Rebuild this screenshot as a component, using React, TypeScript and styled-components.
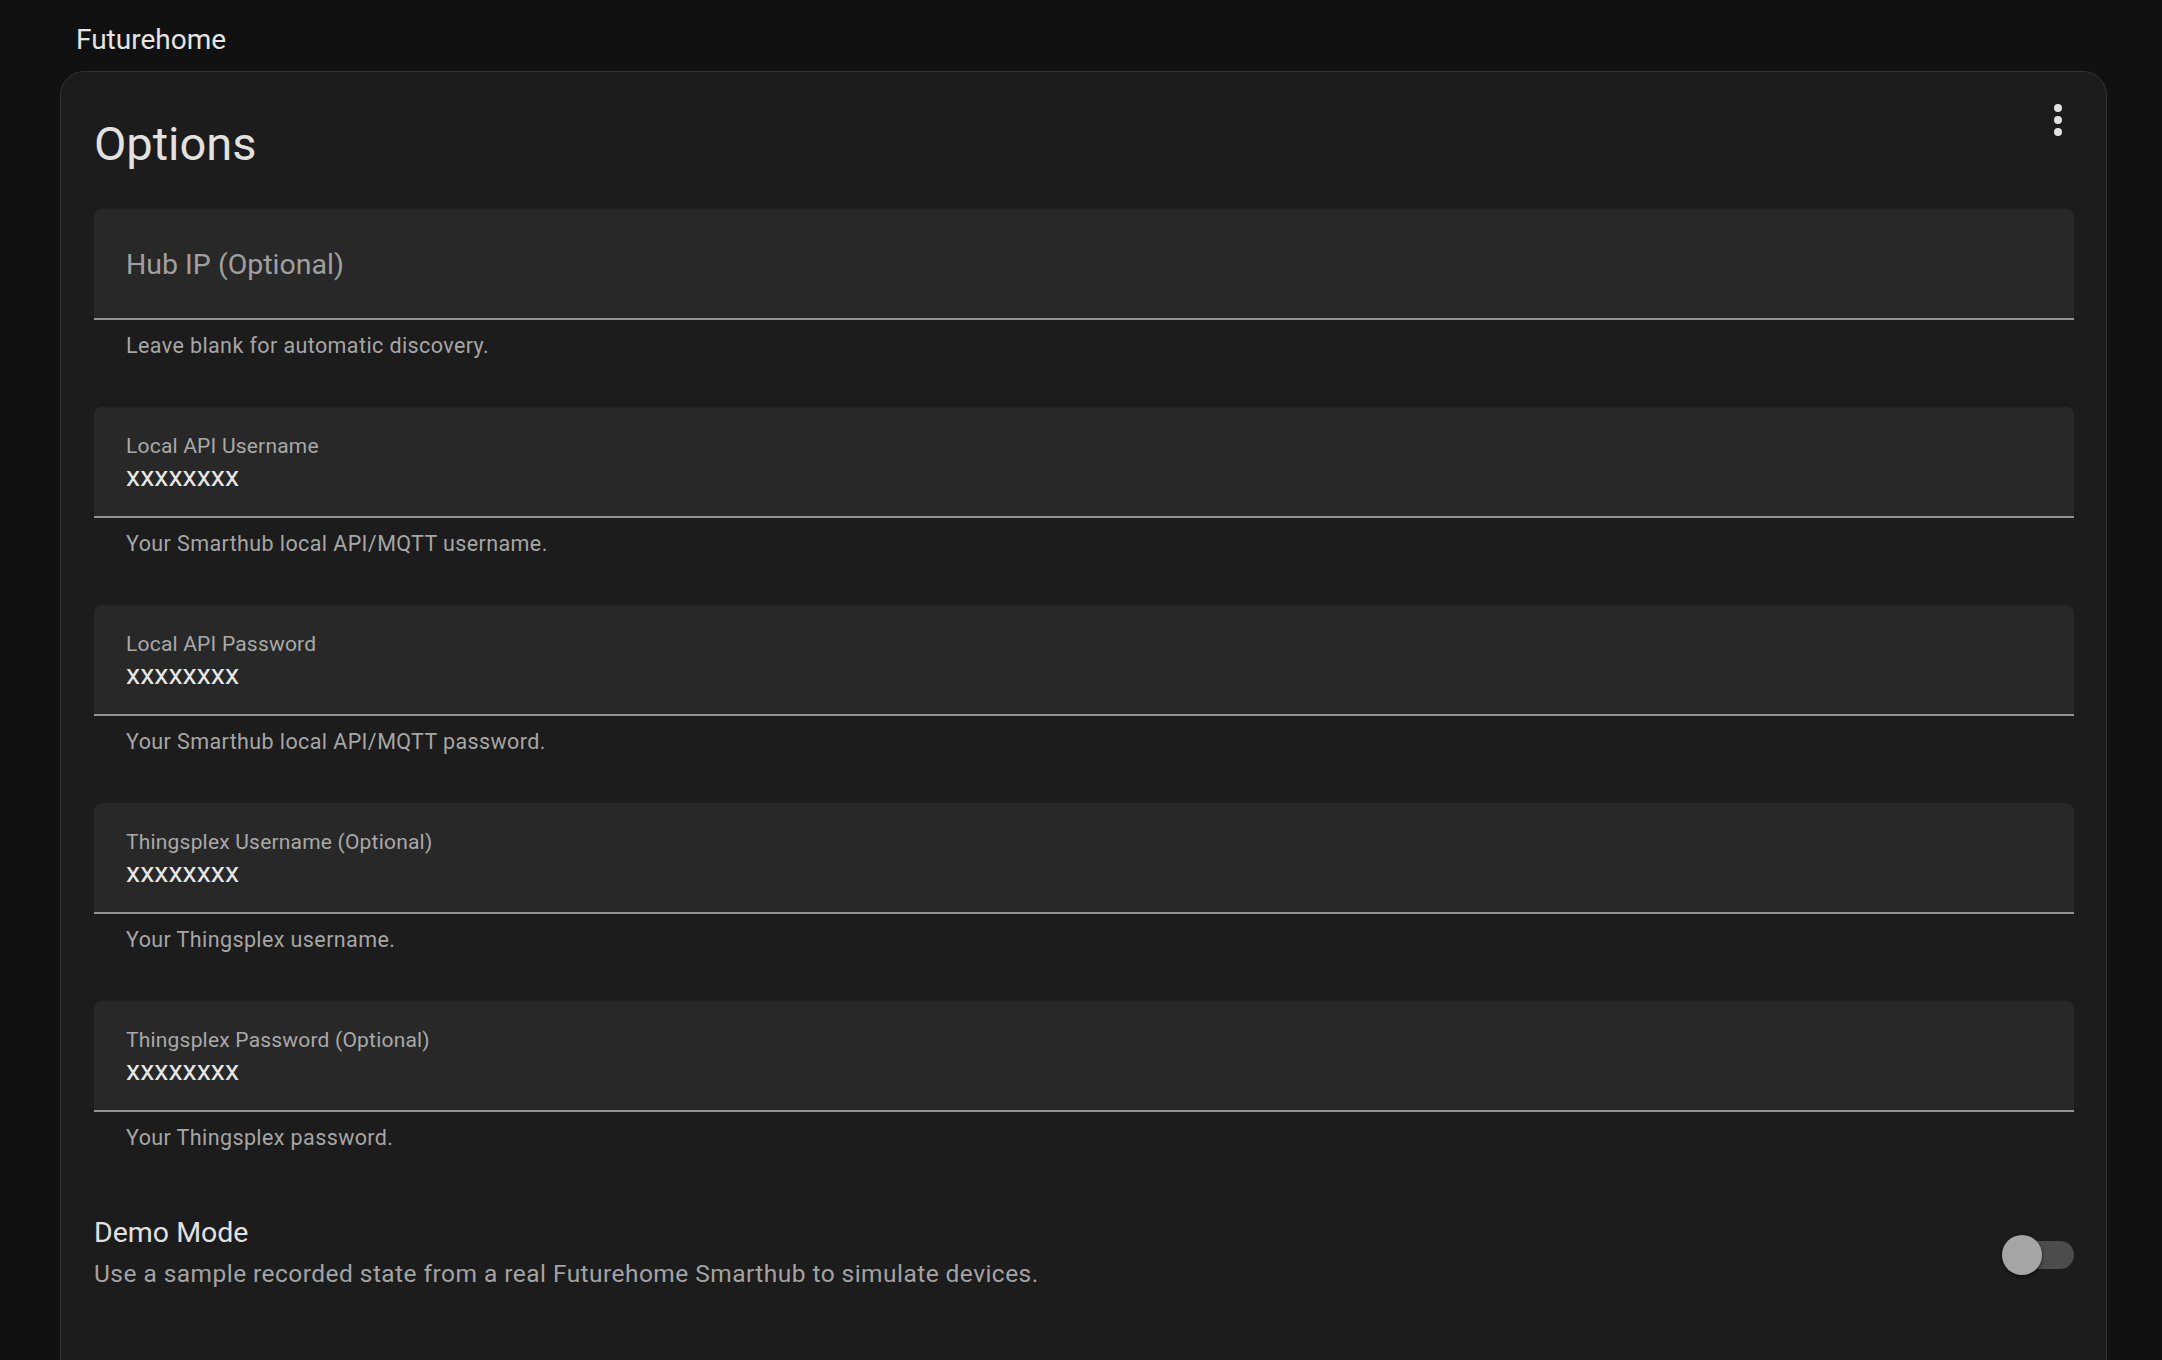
import styled, { createGlobalStyle } from "styled-components";

const GlobalStyle = createGlobalStyle`
    html, body {
        margin: 0;
        padding: 0;
        background: #111111;
        font-family: Roboto, "Noto Sans", "Liberation Sans", sans-serif;
        -webkit-font-smoothing: antialiased;
    }
`;

interface FieldDef {
    label: string;
    value?: string;
    helper: string;
}

const fields: FieldDef[] = [
    { label: "Hub IP (Optional)", helper: "Leave blank for automatic discovery." },
    { label: "Local API Username", value: "xxxxxxxx", helper: "Your Smarthub local API/MQTT username." },
    { label: "Local API Password", value: "xxxxxxxx", helper: "Your Smarthub local API/MQTT password." },
    { label: "Thingsplex Username (Optional)", value: "xxxxxxxx", helper: "Your Thingsplex username." },
    { label: "Thingsplex Password (Optional)", value: "xxxxxxxx", helper: "Your Thingsplex password." },
];

const DotsIcon = () => (
    <svg width="48" height="48" viewBox="0 0 24 24" fill="#e1e1e1">
        <path d="M12,16A2,2 0 0,1 14,18A2,2 0 0,1 12,20A2,2 0 0,1 10,18A2,2 0 0,1 12,16M12,10A2,2 0 0,1 14,12A2,2 0 0,1 12,14A2,2 0 0,1 10,12A2,2 0 0,1 12,10M12,4A2,2 0 0,1 14,6A2,2 0 0,1 12,8A2,2 0 0,1 10,6A2,2 0 0,1 12,4Z" />
    </svg>
);

/*---> Main Component <---*/
const App = () => {
    return (
        <Page>
            <GlobalStyle />
            <Breadcrumb>Futurehome</Breadcrumb>
            <Card>
                <CardHeader>
                    <Title>Options</Title>
                    <MenuButton aria-label="menu">
                        <DotsIcon />
                    </MenuButton>
                </CardHeader>

                <Form>
                    {fields.map((f) => (
                        <FieldGroup key={f.label}>
                            <FieldBox $filled={!!f.value}>
                                {f.value ? (
                                    <>
                                        <FloatLabel>{f.label}</FloatLabel>
                                        <Value>{f.value}</Value>
                                    </>
                                ) : (
                                    <Placeholder>{f.label}</Placeholder>
                                )}
                            </FieldBox>
                            <Helper>{f.helper}</Helper>
                        </FieldGroup>
                    ))}

                    <SwitchRow>
                        <SwitchText>
                            <SwitchTitle>Demo Mode</SwitchTitle>
                            <SwitchDesc>
                                Use a sample recorded state from a real Futurehome Smarthub to simulate devices.
                            </SwitchDesc>
                        </SwitchText>
                        <Toggle>
                            <Thumb />
                        </Toggle>
                    </SwitchRow>
                </Form>
            </Card>
        </Page>
    );
};

export default App;



const Page = styled.div`
    min-height: 100vh;
    padding: 0 55px 0 60px;
    box-sizing: border-box;
    overflow: hidden;
`;

const Breadcrumb = styled.div`
    padding: 20px 0 11px 16px;
    font-size: 28px;
    line-height: 40px;
    color: #e4e4e4;
`;

const Card = styled.div`
    background: #1c1c1c;
    border: 1px solid #323232;
    border-radius: 24px;
    padding: 24px 32px 200px 33px;
`;

const CardHeader = styled.div`
    display: flex;
    justify-content: space-between;
    align-items: flex-start;
`;

const Title = styled.h1`
    margin: 20px 0 0;
    font-size: 47px;
    font-weight: 400;
    line-height: 56px;
    color: #e1e1e1;
`;

const MenuButton = styled.button`
    width: 48px;
    height: 48px;
    margin-right: -8px;
    padding: 0;
    border: 0;
    background: transparent;
    display: flex;
    align-items: center;
    justify-content: center;
    cursor: pointer;
`;

const Form = styled.div`
    margin-top: 37px;
    display: flex;
    flex-direction: column;
`;

const FieldGroup = styled.div`
    display: flex;
    flex-direction: column;
`;

const FieldBox = styled.div<{ $filled: boolean }>`
    background: #282828;
    border-radius: 8px 8px 0 0;
    border-bottom: 2px solid #929292;
    padding: ${(p) => (p.$filled ? "26px 32px 0" : "38px 32px 0")};
    height: ${(p) => (p.$filled ? "83px" : "71px")};
    display: flex;
    flex-direction: column;
`;

const FloatLabel = styled.div`
    font-size: 21px;
    line-height: 26px;
    letter-spacing: 0.2px;
    color: #a9a9a9;
`;

const Value = styled.div`
    font-size: 28.5px;
    line-height: 36px;
    color: #e6e6e6;
`;

const Placeholder = styled.div`
    font-size: 28.5px;
    line-height: 36px;
    color: #a0a0a0;
`;

const Helper = styled.div`
    padding: 11px 32px 46px;
    font-size: 21.5px;
    line-height: 30px;
    letter-spacing: 0.4px;
    color: #a6a6a6;
`;

const SwitchRow = styled.div`
    display: flex;
    align-items: center;
    justify-content: space-between;
    padding-top: 14px;
`;

const SwitchText = styled.div`
    display: flex;
    flex-direction: column;
`;

const SwitchTitle = styled.div`
    font-size: 28.5px;
    line-height: 40px;
    color: #e1e1e1;
`;

const SwitchDesc = styled.div`
    margin-top: 3px;
    font-size: 24.5px;
    line-height: 36px;
    letter-spacing: 0.45px;
    color: #a3a3a3;
`;

const Toggle = styled.div`
    position: relative;
    width: 72px;
    height: 28px;
    margin-top: 4px;
    border-radius: 14px;
    background: #4c4c4c;
    flex-shrink: 0;
`;

const Thumb = styled.div`
    position: absolute;
    left: 0;
    top: -6px;
    width: 40px;
    height: 40px;
    border-radius: 50%;
    background: #a5a5a5;
    box-shadow: 0 2px 4px rgba(0, 0, 0, 0.5);
`;
